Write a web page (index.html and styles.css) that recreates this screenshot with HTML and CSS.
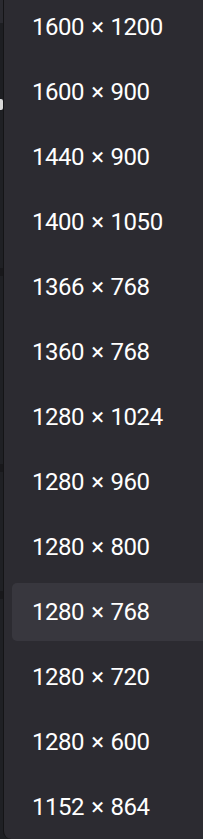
FILE: index.html
```html
<!DOCTYPE html>
<html lang="en">
<head>
<meta charset="utf-8">
<title>Resolution list</title>
<link rel="stylesheet" href="styles.css">
</head>
<body>
<div class="screen">
  <div class="page-strip">
    <div class="band band-top"></div>
    <div class="band band-dark"></div>
    <div class="band band-glyph"><span class="mark"></span></div>
    <div class="band band-mid"></div>
    <div class="band band-line"></div>
    <div class="band band-mid2"></div>
    <div class="band band-line"></div>
    <div class="band band-mid3"></div>
    <div class="band band-line"></div>
    <div class="band band-rest"></div>
  </div>
  <div class="menu">
    <ul class="list">
      <li class="item">1600 × 1200</li>
      <li class="item">1600 × 900</li>
      <li class="item">1440 × 900</li>
      <li class="item">1400 × 1050</li>
      <li class="item">1366 × 768</li>
      <li class="item">1360 × 768</li>
      <li class="item">1280 × 1024</li>
      <li class="item">1280 × 960</li>
      <li class="item">1280 × 800</li>
      <li class="item item-hover">1280 × 768</li>
      <li class="item">1280 × 720</li>
      <li class="item">1280 × 600</li>
      <li class="item">1152 × 864</li>
    </ul>
  </div>
</div>
</body>
</html>
```

FILE: styles.css
```css
html, body {
  margin: 0;
  padding: 0;
  width: 203px;
  height: 839px;
  overflow: hidden;
  background: #1e1f23;
}

.screen {
  display: flex;
  width: 203px;
  height: 839px;
  overflow: hidden;
}

.page-strip {
  flex: 0 0 3px;
  display: flex;
  flex-direction: column;
  overflow: hidden;
  background: #1f2024;
}

.band { flex: 0 0 auto; }
.band-top { height: 23px; background: #2a2a30; }
.band-dark { height: 74px; background: #1d1e22; }
.band-glyph {
  height: 14px;
  display: flex;
  align-items: center;
  background: #1d1e22;
}
.mark {
  display: block;
  width: 3px;
  height: 11px;
  border-radius: 0 2px 2px 0;
  background: #d8d8d8;
}
.band-mid { height: 157px; background: #1f2024; }
.band-line { height: 8px; background: #18181b; }
.band-mid2 { height: 188px; background: #1f2024; }
.band-mid3 { height: 119px; background: #1f2024; }
.band-rest { flex: 1 1 auto; background: #1f2024; }

.menu {
  flex: 1 0 auto;
  min-width: 220px;
  background: #2c2b31;
  border-left: 1px solid #141416;
  border-radius: 0 0 0 8px;
  overflow: hidden;
}

.list {
  list-style: none;
  margin: -2px 0 0 0;
  padding: 0 0 0 8px;
  display: flex;
  flex-direction: column;
  gap: 7px;
}

.item {
  height: 58px;
  display: flex;
  align-items: center;
  padding-left: 20px;
  border-radius: 5px;
  font-family: "Roboto", "Liberation Sans", sans-serif;
  font-size: 24px;
  letter-spacing: -0.45px;
  word-spacing: 1.5px;
  color: #ffffff;
  white-space: nowrap;
}

.item-hover {
  background: #38373e;
}
```
